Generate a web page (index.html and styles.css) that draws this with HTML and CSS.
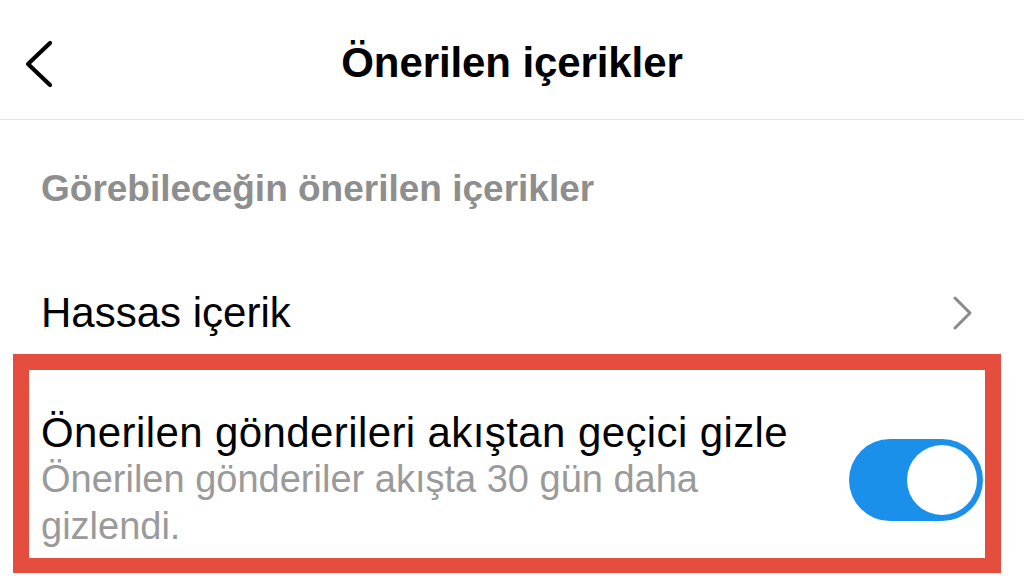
FILE: index.html
```html
<!DOCTYPE html>
<html lang="tr">
<head>
<meta charset="utf-8">
<title>Önerilen içerikler</title>
<link rel="stylesheet" href="styles.css">
</head>
<body>
<div class="screen">
  <header class="topbar">
    <button class="back" aria-label="Geri">
      <svg width="34" height="48" viewBox="0 0 34 48"><polyline points="27,3 5,24 27,45" fill="none" stroke="#000" stroke-width="4.2" stroke-linecap="round" stroke-linejoin="round"/></svg>
    </button>
    <h1 class="title">Önerilen içerikler</h1>
    <span class="spacer"></span>
  </header>

  <div class="section-label">Görebileceğin önerilen içerikler</div>

  <div class="row link-row">
    <span class="row-text">Hassas içerik</span>
    <svg class="chev" width="24" height="36" viewBox="0 0 24 36"><polyline points="5,3 20,18 5,33" fill="none" stroke="#8a8a8a" stroke-width="3" stroke-linecap="round" stroke-linejoin="round"/></svg>
  </div>

  <div class="highlight">
    <div class="row toggle-row">
      <div class="toggle-text">
        <div class="row-text">Önerilen gönderileri akıştan geçici gizle</div>
        <div class="sub">Önerilen gönderiler akışta 30 gün daha gizlendi.</div>
      </div>
      <div class="switch on"><span class="knob"></span></div>
    </div>
  </div>
</div>
</body>
</html>
```
FILE: styles.css
```css
* { box-sizing: border-box; }
html, body {
  margin: 0;
  padding: 0;
  background: #fff;
}
body {
  font-family: "Liberation Sans", Arial, Helvetica, sans-serif;
  color: #000;
  width: 1024px;
  height: 583px;
  overflow: hidden;
}
.topbar {
  height: 120px;
  border-bottom: 1px solid #e3e3e3;
  display: grid;
  grid-template-columns: 120px 1fr 120px;
  align-items: center;
}
.back {
  border: 0;
  background: none;
  padding: 0 0 0 23px;
  margin-top: 8px;
  display: flex;
  align-items: center;
  cursor: pointer;
}
.title {
  margin: 0;
  text-align: center;
  font-size: 42px;
  font-weight: 700;
  line-height: 48px;
  margin-top: 6px;
  letter-spacing: -0.1px;
}
.section-label {
  padding: 45px 0 0 41px;
  font-size: 37px;
  font-weight: 700;
  line-height: 48px;
  color: #8e8e8e;
}
.row {
  display: flex;
  align-items: center;
}
.row-text {
  font-size: 42px;
  line-height: 48px;
}
.link-row {
  padding: 76px 50px 17px 41px;
  justify-content: space-between;
}
.chev { display: block; }
.highlight {
  margin-left: 13px;
  width: 988px;
  border: 16px solid #e54d3e;
  border-bottom-width: 15px;
}
.toggle-row {
  padding: 40px 2px 8px 12px;
  gap: 30px;
}
.toggle-text {
  flex: 1;
}
.toggle-text .row-text {
  line-height: 46px;
  letter-spacing: 0.4px;
}
.sub {
  font-size: 38px;
  line-height: 47px;
  color: #9a9a9a;
}
.switch {
  width: 134px;
  height: 82px;
  border-radius: 41px;
  background: #1a90ea;
  padding: 6px;
  display: flex;
  justify-content: flex-end;
  flex-shrink: 0;
}
.knob {
  width: 70px;
  height: 70px;
  border-radius: 50%;
  background: #fff;
}
```
